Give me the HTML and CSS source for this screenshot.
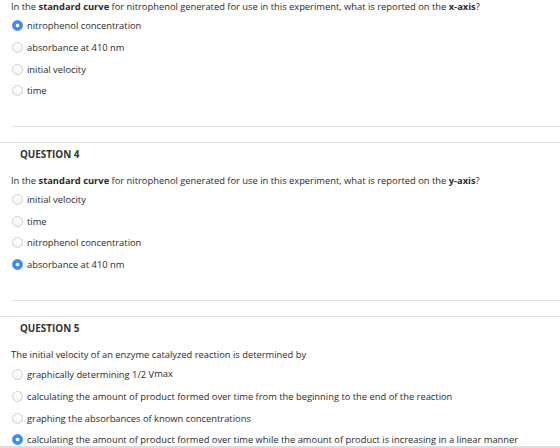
FILE: index.html
```html
<!DOCTYPE html>
<html>
<head>
  <title>Quiz</title>
  <link rel="stylesheet" href="styles.css">
</head>
<body>

<div class="question first">
  <div class="q-body">
    <p class="q-text">In the <b>standard curve</b> for nitrophenol generated for use in this experiment, what is reported on the <b>x-axis</b>?</p>
    <ul class="answers">
      <li class="checked"><span class="radio"></span>nitrophenol concentration</li>
      <li><span class="radio"></span>absorbance at 410 nm</li>
      <li><span class="radio"></span>initial velocity</li>
      <li><span class="radio"></span>time</li>
    </ul>
  </div>
</div>

<div class="question">
  <h3 class="q-head">QUESTION 4</h3>
  <div class="q-body">
    <p class="q-text">In the <b>standard curve</b> for nitrophenol generated for use in this experiment, what is reported on the <b>y-axis</b>?</p>
    <ul class="answers">
      <li><span class="radio"></span>initial velocity</li>
      <li><span class="radio"></span>time</li>
      <li><span class="radio"></span>nitrophenol concentration</li>
      <li class="checked"><span class="radio"></span>absorbance at 410 nm</li>
    </ul>
  </div>
</div>

<div class="question">
  <h3 class="q-head">QUESTION 5</h3>
  <div class="q-body">
    <p class="q-text">The initial velocity of an enzyme catalyzed reaction is determined by</p>
    <ul class="answers">
      <li class="tall"><span class="radio"></span>graphically determining 1/2 V<sub>max</sub></li>
      <li><span class="radio"></span>calculating the amount of product formed over time from the beginning to the end of the reaction</li>
      <li><span class="radio"></span>graphing the absorbances of known concentrations</li>
      <li class="checked"><span class="radio"></span>calculating the amount of product formed over time while the amount of product is increasing in a linear manner</li>
    </ul>
  </div>
</div>

<div class="scroll-edge"></div>
</body>
</html>
```

FILE: styles.css
```css
body { margin: 0; font-family: "Open Sans", "DejaVu Sans", sans-serif; font-size: 9.35px; color: #2b2b2b; background: #fff; overflow: hidden; }
.question { border-top: 1px solid #e4e4e4; }
.question.first { border-top: none; }
.q-head { margin: 0; padding: 5px 0 0 20px; font-size: 9.9px; line-height: 12px; font-weight: bold; color: #333; }
.q-body { padding-left: 11px; }
.question + .question .q-text { margin-top: 14px; }
.q-text { margin: 0; line-height: 13px; white-space: nowrap; }
.answers { list-style: none; margin: 2px 0 0; padding: 0 0 24px; border-bottom: 1px solid #e4e4e4; margin-bottom: 15px; }
.answers li { display: flex; align-items: center; height: 21.7px; white-space: nowrap; }
.answers li.tall { height: 23px; }
.radio { flex: none; width: 9px; height: 9px; margin: 0 4px 0 1px; border: 1px solid #cfcfcf; border-radius: 50%; background: linear-gradient(#fff, #f4f4f4); }
.checked .radio { border-color: #3c8cf3; background: radial-gradient(circle, #fff 0 1.6px, #3c8cf3 2.2px); }
sub { font-size: 100%; vertical-align: -3px; line-height: 0; }
.scroll-edge { position: fixed; left: 0; right: 0; bottom: 0; height: 2px; background: #dcdcdc; }
```
